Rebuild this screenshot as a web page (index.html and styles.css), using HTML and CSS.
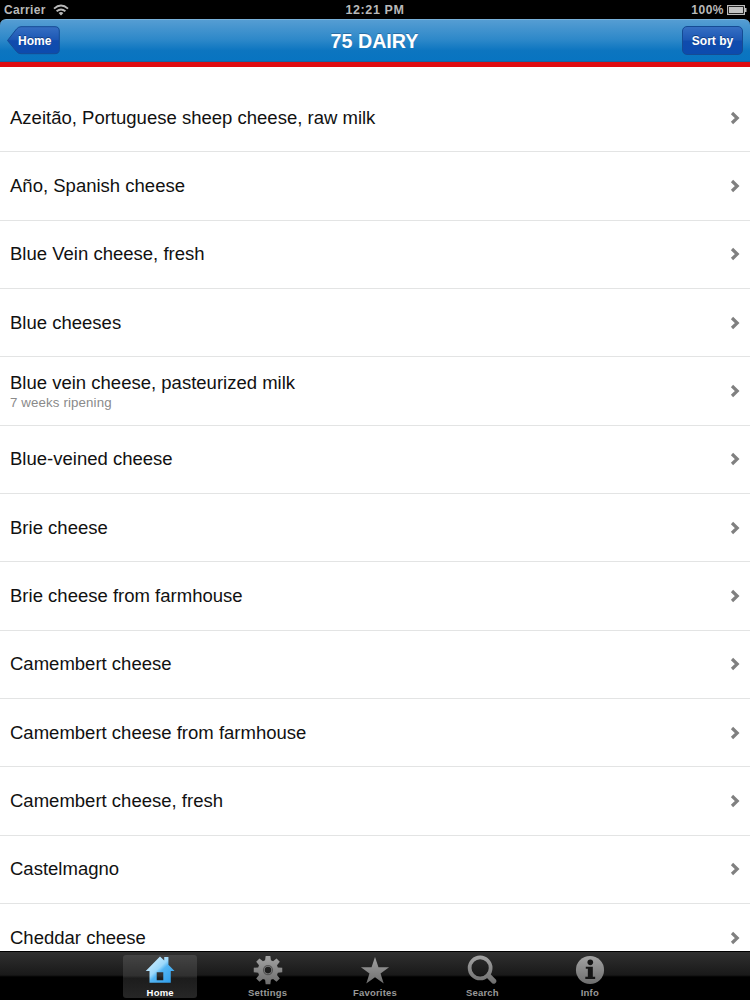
FILE: index.html
```html
<!DOCTYPE html>
<html lang="en">
<head>
<meta charset="utf-8">
<title>75 Dairy</title>
<link rel="stylesheet" href="styles.css">
</head>
<body>
<div class="app">
  <div class="status">
    <div class="status-left"><span class="carrier">Carrier</span>
      <svg class="wifi" width="16" height="12" viewBox="0 0 16 12" fill="none" stroke="#b9b9b9" stroke-width="1.9"><path d="M1 4.600Q8-1.400 15 4.600"/><path d="M3.600 7.300Q8 3.600 12.400 7.300"/><path d="M5.600 9Q8 7 10.400 9L8 11.600Z" fill="#b9b9b9" stroke="none"/></svg>
    </div>
    <span class="time">12:21 PM</span>
    <div class="status-right"><span class="percent">100%</span>
      <svg class="battery" width="20" height="10" viewBox="0 0 20 10"><rect x=".6" y=".6" width="16.800" height="8.800" fill="none" stroke="#bdbdbd" stroke-width="1.200"/><rect x="2" y="2" width="14" height="6" fill="#c3c3c3"/><path d="M18 3h1.500v4H18z" fill="#bdbdbd"/></svg>
    </div>
  </div>
  <header class="nav">
    <a class="back"><svg class="back-shape" width="54" height="29" viewBox="0 0 54 29"><defs><linearGradient id="btn" x1="0" y1="0" x2="0" y2="1"><stop offset="0" stop-color="#366fc3"/><stop offset=".48" stop-color="#1c57b4"/><stop offset=".52" stop-color="#104bad"/><stop offset="1" stop-color="#0c4bae"/></linearGradient></defs><path d="M1.500 14.500L10.500 3Q12.500 .7 15 .7H49Q53.300 .7 53.300 5V23.500Q53.300 27.700 49 27.700H15Q12.500 27.700 10.500 25.500Z" fill="url(#btn)" stroke="#154b94"/></svg><span class="back-text">Home</span></a>
    <h1 class="title">75 DAIRY</h1>
    <a class="sort">Sort by</a>
  </header>
  <main class="list">
    <div class="row"><div class="label">Azeitão, Portuguese sheep cheese, raw milk</div><svg class="chev" viewBox="0 0 10 14"><path d="M2 2L7.200 7L2 12"/></svg></div>
    <div class="row"><div class="label">Año, Spanish cheese</div><svg class="chev" viewBox="0 0 10 14"><path d="M2 2L7.200 7L2 12"/></svg></div>
    <div class="row"><div class="label">Blue Vein cheese, fresh</div><svg class="chev" viewBox="0 0 10 14"><path d="M2 2L7.200 7L2 12"/></svg></div>
    <div class="row"><div class="label">Blue cheeses</div><svg class="chev" viewBox="0 0 10 14"><path d="M2 2L7.200 7L2 12"/></svg></div>
    <div class="row"><div class="stack"><div class="label">Blue vein cheese, pasteurized milk</div><div class="detail">7 weeks ripening</div></div><svg class="chev" viewBox="0 0 10 14"><path d="M2 2L7.200 7L2 12"/></svg></div>
    <div class="row"><div class="label">Blue-veined cheese</div><svg class="chev" viewBox="0 0 10 14"><path d="M2 2L7.200 7L2 12"/></svg></div>
    <div class="row"><div class="label">Brie cheese</div><svg class="chev" viewBox="0 0 10 14"><path d="M2 2L7.200 7L2 12"/></svg></div>
    <div class="row"><div class="label">Brie cheese from farmhouse</div><svg class="chev" viewBox="0 0 10 14"><path d="M2 2L7.200 7L2 12"/></svg></div>
    <div class="row"><div class="label">Camembert cheese</div><svg class="chev" viewBox="0 0 10 14"><path d="M2 2L7.200 7L2 12"/></svg></div>
    <div class="row"><div class="label">Camembert cheese from farmhouse</div><svg class="chev" viewBox="0 0 10 14"><path d="M2 2L7.200 7L2 12"/></svg></div>
    <div class="row"><div class="label">Camembert cheese, fresh</div><svg class="chev" viewBox="0 0 10 14"><path d="M2 2L7.200 7L2 12"/></svg></div>
    <div class="row"><div class="label">Castelmagno</div><svg class="chev" viewBox="0 0 10 14"><path d="M2 2L7.200 7L2 12"/></svg></div>
    <div class="row"><div class="label">Cheddar cheese</div><svg class="chev" viewBox="0 0 10 14"><path d="M2 2L7.200 7L2 12"/></svg></div>
  </main>
  <nav class="tabs">
    <a class="tab active">
      <svg class="icon" viewBox="0 0 32 32"><defs><linearGradient id="blue" x1="0" y1="0" x2="1" y2="1"><stop offset="0" stop-color="#e2f5ff"/><stop offset=".45" stop-color="#9bd8fb"/><stop offset=".55" stop-color="#54b5f3"/><stop offset="1" stop-color="#299be9"/></linearGradient></defs><path fill="url(#blue)" fill-rule="evenodd" d="M16 1.500L20.500 5.900V2H25V10.300L31.500 17H27.500V29.500H4.800V17H.8ZM12.500 18.500V27H19.500V18.500Z"/></svg>
      <span class="tab-text">Home</span></a>
    <a class="tab">
      <svg class="icon" viewBox="0 0 32 32"><defs><linearGradient id="gray" x1="0" y1="0" x2="0" y2="32" gradientUnits="userSpaceOnUse"><stop offset="0" stop-color="#a5a5a5"/><stop offset="1" stop-color="#6b6b6b"/></linearGradient></defs><path fill="url(#gray)" fill-rule="evenodd" d="M13.500 1H18.500L19.100 5.700L21.400 6.700L25.100 3.800L28.600 7.300L25.600 11L26.500 13.200L31.200 13.700V18.500L26.500 19L25.600 21.200L28.600 25L25.100 28.500L21.400 25.500L19.100 26.500L18.500 31.200H13.500L12.900 26.500L10.600 25.500L6.900 28.500L3.400 25L6.400 21.200L5.500 19L.8 18.500V13.700L5.500 13.200L6.400 11L3.400 7.300L6.900 3.800L10.600 6.700L12.900 5.700ZM16 12.600A3.500 3.500 0 1 0 16 19.600A3.500 3.500 0 1 0 16 12.600Z"/><circle cx="16" cy="16.100" r="4.800" fill="none" stroke="#555" stroke-width="1.300"/></svg>
      <span class="tab-text">Settings</span></a>
    <a class="tab">
      <svg class="icon" viewBox="0 0 32 32"><path fill="url(#gray)" d="M16 2L19.700 13H31L21.900 19.600L25.300 30.500L16 23.800L6.700 30.500L10.100 19.600L1 13H12.300Z"/></svg>
      <span class="tab-text">Favorites</span></a>
    <a class="tab">
      <svg class="icon" viewBox="0 0 32 32" fill="none" stroke="url(#gray)"><circle cx="14" cy="13.800" r="11.200" stroke-width="4"/><path d="M23 22.300L28.500 27.800" stroke-width="5.500" stroke-linecap="round"/></svg>
      <span class="tab-text">Search</span></a>
    <a class="tab">
      <svg class="icon" viewBox="0 0 32 32"><circle cx="16" cy="16" r="15" fill="url(#gray)"/><circle cx="16.300" cy="7.800" r="3" fill="#151515"/><path fill="#151515" d="M11.500 12.500H19V23.300H21.500V25.500H11V23.300H13.700V14.700H11.500Z"/></svg>
      <span class="tab-text">Info</span></a>
  </nav>
</div>
</body>
</html>
```
FILE: styles.css
```css
body { margin: 0; background: #fff; font-family: "Liberation Sans", Arial, sans-serif; }
.app { width: 750px; height: 1000px; overflow: hidden; display: flex; flex-direction: column; background: #000; }
.status { height: 19px; flex: none; display: grid; grid-template-columns: 1fr auto 1fr; align-items: center; padding: 0 4px; background: #000; color: #b9b9b9; font-size: 12px; font-weight: bold; line-height: 18px; }
.status-left { display: flex; align-items: center; gap: 7px; }
.carrier { letter-spacing: .35px; }
.time { font-size: 12.500px; letter-spacing: .6px; }
.status-right { display: flex; align-items: center; justify-content: flex-end; gap: 3px; }
.percent { letter-spacing: .5px; }
.battery { margin-right: -1px; }
.nav { height: 43px; flex: none; box-sizing: border-box; display: grid; grid-template-columns: 1fr auto 1fr; align-items: center; padding: 0 7px 0 6px; border-top: 1px solid #78b1da; border-bottom: 1px solid #1763a0; border-radius: 6px 6px 0 0; background: linear-gradient(#559dd3, #2d88c9 48%, #0c75c0 75%, #0874c1); color: #fff; }
.back { display: grid; width: 54px; height: 29px; align-items: center; }
.back-shape, .back-text { grid-area: 1 / 1; }
.back-text { padding-left: 12px; font-size: 12px; font-weight: bold; text-shadow: 0 -1px #123f82; }
.title { margin: 0; font-size: 19.700px; line-height: 24px; text-shadow: 0 -1px #286da4; }
.sort { justify-self: end; box-sizing: border-box; width: 61px; height: 29px; border: 1px solid #154b94; border-radius: 5px; background: linear-gradient(#366fc3, #1c57b4 48%, #104bad 52%, #0c4bae); text-align: center; font-size: 12px; line-height: 28px; font-weight: bold; text-shadow: 0 -1px #123f82; }
.list { flex: 1; min-height: 0; overflow: hidden; border-top: 5px solid #df0b10; padding-top: 17px; background: #fff; }
.row { box-sizing: border-box; height: 68.350px; display: flex; align-items: center; justify-content: space-between; padding: 0 10px; border-bottom: 1px solid #e3e4e4; }
.label { color: #111; font-size: 18.530px; line-height: 22px; white-space: nowrap; }
.detail { color: #8a8a8a; font-size: 13.300px; line-height: 17px; letter-spacing: .12px; }
.stack { padding-top: 1px; }
.chev { width: 10px; height: 14px; fill: none; stroke: #808080; stroke-width: 3.200; }
.tabs { height: 49px; flex: none; box-sizing: border-box; display: flex; justify-content: center; gap: 33.400px; padding-top: 3px; border-top: 1px solid #000; background: linear-gradient(#303030, #191919 48%, #000 52%, #000); }
.tab { width: 74px; height: 43px; display: flex; flex-direction: column; align-items: center; color: #999; }
.active { border-radius: 3px; background: linear-gradient(#444, #303030 48%, #1c1c1c 54%, #262626); color: #fff; }
.icon { width: 30px; height: 30px; flex: none; }
.tab-text { font-size: 9.500px; line-height: 12px; font-weight: bold; letter-spacing: .2px; margin-top: 2px; }
```
